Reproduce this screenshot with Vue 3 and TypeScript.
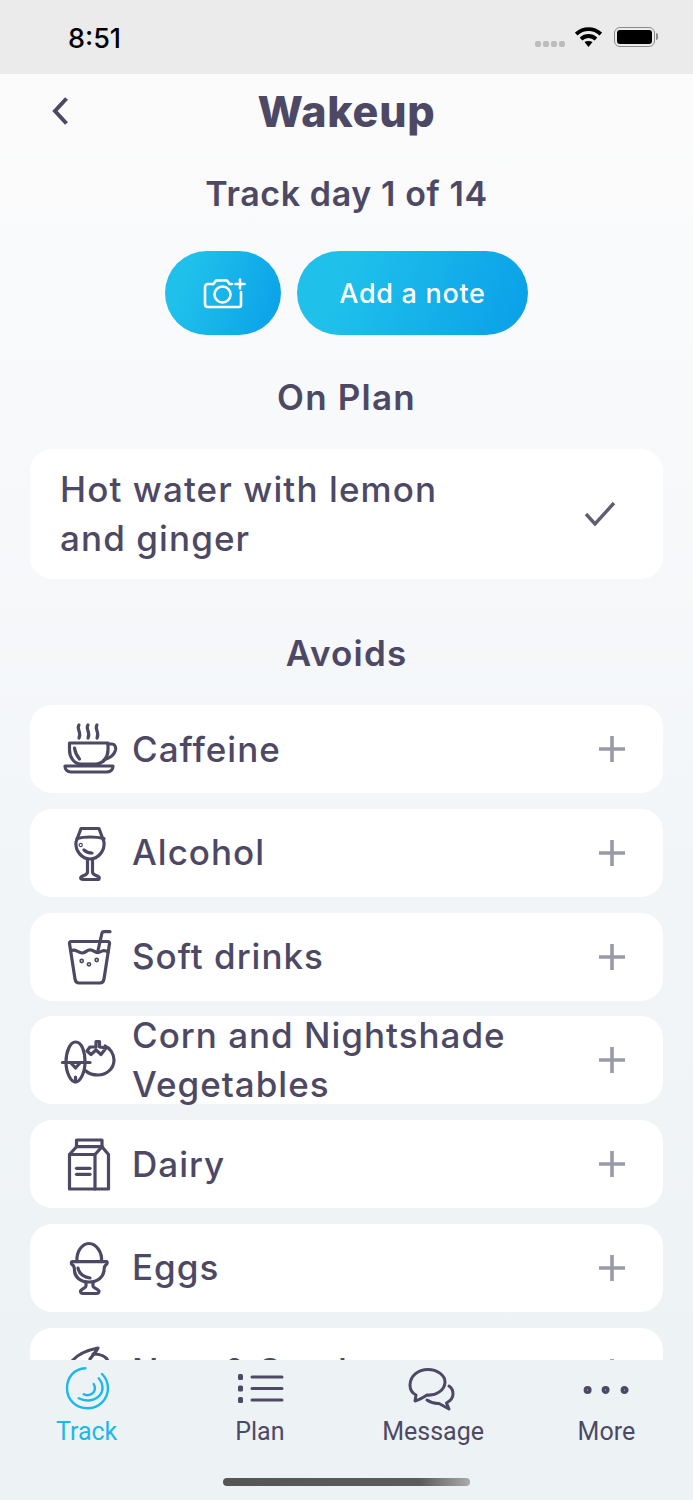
<template>
  <div class="screen">
    <div class="status-bar">
      <span class="time">8:51</span>
      <div class="status-icons">
        <div class="signal"><i></i><i></i><i></i><i></i></div>
        <svg class="wifi" width="27" height="20" viewBox="0 0 27 20">
          <path d="M1.2 7C8.500 .5 18.500 .5 25.800 7" fill="none" stroke="#000" stroke-width="3.800" />
          <path d="M6 12C10.500 8 16.500 8 21 12" fill="none" stroke="#000" stroke-width="3.800" />
          <path d="M9.500 15L13.500 20L17.500 15C15 13.500 12 13.500 9.500 15Z" fill="#000" />
        </svg>
        <div class="battery"><span class="battery-fill"></span></div>
      </div>
    </div>

    <div class="page">
      <header class="nav">
        <svg class="back" width="18" height="30" viewBox="0 0 18 30">
          <path d="M15.500 2.500L4 15L15.500 27.500" fill="none" stroke="#4d4965" stroke-width="4" />
        </svg>
        <h1>Wakeup</h1>
      </header>

      <div class="scroll">
        <h2 class="track-title">Track day 1 of 14</h2>
        <div class="actions">
          <button class="pill photo">
            <svg width="48" height="40" viewBox="0 0 48 40" fill="none" stroke="#fff" stroke-width="2.600" stroke-linecap="round" stroke-linejoin="round">
              <path d="M33 11H30.500L28 7.500H17L14.500 11H9C7.300 11 6 12.300 6 14V31C6 32.700 7.300 34 9 34H40C41.200 34 42 33.200 42 32V19" />
              <circle cx="23.500" cy="21.500" r="8" />
              <path d="M41 6.500V15.500M36.500 11H45.500" />
            </svg>
          </button>
          <button class="pill note">Add a note</button>
        </div>

        <h3 class="section-title">On Plan</h3>
        <div class="plan-card">
          <span class="plan-text">Hot water with lemon and ginger</span>
          <svg width="32" height="26" viewBox="0 0 32 26">
            <path d="M2 13L11 23L30 2" fill="none" stroke="#615e74" stroke-width="3.400" />
          </svg>
        </div>

        <h3 class="section-title avoids">Avoids</h3>
        <div class="avoid-list">
          <div v-for="item in avoids" :key="item.name" class="avoid-row">
            <svg class="avoid-icon" width="60" height="60" viewBox="0 0 60 60" fill="none" stroke="#4d4965" stroke-width="3.200" stroke-linecap="round" stroke-linejoin="round">
              <path v-for="d in item.paths" :key="d" :d="d" />
            </svg>
            <span class="avoid-name">{{ item.name }}</span>
            <svg class="plus" width="28" height="28" viewBox="0 0 28 28">
              <path d="M14 1V27M1 14H27" fill="none" stroke="#9a99a8" stroke-width="3.600" />
            </svg>
          </div>
        </div>
      </div>
    </div>

    <nav class="tabs">
      <div v-for="tab in tabs" :key="tab.label" class="tab" :class="{ active: tab.active }">
        <svg width="60" height="48" viewBox="0 0 60 48" fill="none" stroke="currentColor" stroke-width="3" stroke-linecap="round" stroke-linejoin="round">
          <path v-for="d in tab.paths" :key="d" :d="d" />
        </svg>
        <span>{{ tab.label }}</span>
      </div>
    </nav>
    <div class="home-bar"><span></span></div>
  </div>
</template>

<script setup lang="ts">
interface AvoidItem {
  name: string
  paths: string[]
}

interface TabItem {
  label: string
  active?: boolean
  paths: string[]
}

// small ring that reads as a filled dot once it is stroked
const dot = (x: number, y: number, r: number) =>
  `M${x - r} ${y}a${r} ${r} 0 1 0 ${r * 2} 0a${r} ${r} 0 1 0 ${-r * 2} 0Z`

const avoids: AvoidItem[] = [
  {
    name: 'Caffeine',
    paths: [
      'M9.500 24H48V31C48 38 43 45 36 45H21C14 45 9.500 38 9.500 31Z',
      'M48 25H52C55 25 56 28 55.500 31C54.500 36 50 39 44 41',
      'M14.500 29C15 34 17 37 19.500 40',
      'M5 47H53C53 50 51 53 47 53H11C7 53 5 50 5 47Z',
      'M19 6C16 10 22 13 19 19',
      'M28 6C25 10 31 13 28 19',
      'M37 6C34 10 40 13 37 19'
    ]
  },
  {
    name: 'Alcohol',
    paths: [
      'M21 5.500H39L44 19C45 28 38 36 30 36C22 36 15 28 16 19Z',
      'M17 15.500C24 13.500 36 13.500 44 15.500',
      dot(20.7, 22, 0.6),
      'M24 27C26 29 29 30 32 30',
      'M27.500 36V49C27.500 52 24 52 21 54C20 56 22 56.500 23 56.500H37C39 56.500 40 56 39 54C36 52 32.500 52 32.500 49V36'
    ]
  },
  {
    name: 'Soft drinks',
    paths: [
      'M11 14.500H48C49.500 14.500 49.500 15.500 49.500 16.500L44 52C43.500 55 42 56 40 56H19C17 56 15.500 55 15 52L9.500 16.500C9.500 15.500 9.500 14.500 11 14.500Z',
      'M11 24C15 21 18 26 22 26C26 26 27 22 31 23C35 24 37 27 40 25C43 23 45 23 48 25',
      'M38 23.500L42 6C42.300 5 43 4.700 44 4.700H50',
      dot(21.7, 34, 0.8),
      dot(29, 37.3, 0.8),
      dot(36.7, 33, 0.8)
    ]
  },
  {
    name: 'Corn and Nightshade Vegetables',
    paths: [
      'M15.500 12C22 12 25 22 25 32C25 43 20 52 15.500 52C11 52 6 43 6 32C6 22 10 12 15.500 12Z',
      'M2.500 32.500H30',
      'M11 33L15.500 38L20 33',
      'M15.500 47V52',
      'M45 16C50 18 54 24 54 30C54 39 46 45 38 45C33 45 29 44 26 41',
      'M27 21L31 24.500L36 20L41 24.500L46 18L39.500 17V11.500H36V17L30 17Z'
    ]
  },
  {
    name: 'Dairy',
    paths: [
      'M16.500 6H42V12.700H16.500Z',
      'M16.500 12.700L9.500 20.500V55H48.500V20.500L42 12.700',
      'M9.500 20.500H35L42 12.700',
      'M35 20.500V55',
      'M16.500 34.300H30',
      'M16.500 40.300H30'
    ]
  },
  {
    name: 'Eggs',
    paths: [
      'M17 23.700C16 14 22 5.500 29 5.500C36 5.500 42.500 14 41.500 23.700',
      'M12.500 23.700H46.500C47.500 23.700 47.500 26 46 27C44 28 44 30 44 33C43 39 38 44 29 44C20 44 15 39 14.500 33C14.500 30 14.500 28 12.500 27C11 26 11 23.700 12.500 23.700Z',
      'M18 30C19 35 23 39 30 40',
      'M26 44V48C26 50 21 51 20.500 53C20.500 55 21.500 55.500 23 55.500H36.500C38 55.500 39 55 39 53C38.500 51 33 50 33 48V44'
    ]
  },
  {
    name: 'Nuts & Seeds',
    paths: [
      'M12 19C18 12 28 8 38 6C36 10 33 13 30 17',
      'M33 12C40 12 46 14 48 19'
    ]
  }
]

const tabs: TabItem[] = [
  {
    label: 'Track',
    active: true,
    paths: [
      'M28.400 4.300C17 5 10 13 10 24.300C10 36 19 44.300 30.500 44.300C42 44.300 51 35 51 24.300C51 19 49 14 45 10',
      'M41.700 14.300C46 19 47 26 43 31C38 37 29 38 21.700 34.300',
      'M36.700 20C39 24 38 28 34.500 30C32 31.500 29 31.500 26.700 30.300'
    ]
  },
  {
    label: 'Plan',
    paths: [
      'M9.500 11.500H11.500V14.500H9.500Z',
      'M9.500 23H11.500V26H9.500Z',
      'M9.500 34.500H11.500V37.500H9.500Z',
      'M22 13H52M22 24.500H52M22 36H52'
    ]
  },
  {
    label: 'Message',
    paths: [
      'M12 37L13 31C9 29 7 25 7 21C7 12 15 5.500 25 5.500C34 5.500 42 11 42 18C42 26 33 32 24 31C21 33 16 36 12 37Z',
      'M46 22C49 24 50 27 50 30C50 34 47 37 43.500 39L46 45L36 39.500C31 40 27 38 24 36'
    ]
  },
  {
    label: 'More',
    paths: [
      dot(11.6, 26, 2.5), dot(11.6, 26, 1),
      dot(29.6, 26, 2.5), dot(29.6, 26, 1),
      dot(48.6, 26, 2.5), dot(48.6, 26, 1)
    ]
  }
]
</script>

<style scoped>
.screen {
  width: 693px;
  height: 1500px;
  display: flex;
  flex-direction: column;
  background: #edf2f5;
  overflow: hidden;
  font-family: Inter, "Liberation Sans", sans-serif;
  color: #4d4965;
}

.status-bar {
  height: 74px;
  flex: none;
  display: flex;
  align-items: center;
  justify-content: space-between;
  padding: 0 38px 0 68px;
  box-sizing: border-box;
  background: #ebebeb;
}

.time {
  margin-top: 2px;
  font-size: 27px;
  font-weight: 500;
  color: #000;
}

.status-icons {
  display: flex;
  align-items: center;
  gap: 12px;
}

.signal {
  display: flex;
  gap: 2px;
  margin-top: 13px;
  margin-right: -2px;
}

.signal i {
  width: 6px;
  height: 6px;
  border-radius: 2px;
  background: #bcbcbc;
}

.battery {
  width: 41px;
  height: 20px;
  box-sizing: border-box;
  padding: 2px;
  border: 1.500px solid #8a8a8a;
  border-radius: 6px;
  position: relative;
}

.battery::after {
  content: "";
  position: absolute;
  right: -4px;
  top: 5px;
  width: 2px;
  height: 7px;
  border-radius: 0 2px 2px 0;
  background: #8a8a8a;
}

.battery-fill {
  display: block;
  height: 100%;
  border-radius: 3px;
  background: #000;
}

.page {
  flex: 1;
  min-height: 0;
  display: flex;
  flex-direction: column;
  background: linear-gradient(180deg, #fbfbfb 0%, #f8f9fb 25%, #edf2f5 100%);
  overflow: hidden;
}

.nav {
  height: 76px;
  flex: none;
  display: flex;
  align-items: center;
  justify-content: center;
  position: relative;
}

.nav h1 {
  margin: 0 0 2px;
  font-size: 43px;
  font-weight: 800;
  letter-spacing: 0.8px;
}

.back {
  position: absolute;
  left: 51px;
  top: 22px;
}

.scroll {
  flex: 1;
  min-height: 0;
  overflow: hidden;
  padding: 0 30px;
  display: flex;
  flex-direction: column;
}

.track-title {
  margin: 24px 0 0;
  height: 40px;
  line-height: 40px;
  font-size: 34px;
  font-weight: 600;
  letter-spacing: 0.6px;
  text-align: center;
}

.actions {
  display: flex;
  justify-content: center;
  gap: 16px;
  margin-top: 37px;
}

.pill {
  height: 84px;
  border: none;
  border-radius: 42px;
  background: linear-gradient(110deg, #1fc1eb 20%, #0a9fe8 100%);
  color: #fff;
  font-family: inherit;
  font-size: 27px;
  font-weight: 500;
  letter-spacing: 0.7px;
  display: flex;
  align-items: center;
  justify-content: center;
  padding: 0;
}

.photo {
  width: 116px;
}

.note {
  width: 231px;
}

.section-title {
  margin: 42px 0 0;
  height: 40px;
  line-height: 40px;
  font-size: 35px;
  font-weight: 600;
  letter-spacing: 1.200px;
  text-align: center;
}

.avoids {
  margin-top: 54px;
}

.plan-card {
  margin-top: 32px;
  height: 130px;
  flex: none;
  display: flex;
  align-items: center;
  justify-content: space-between;
  box-sizing: border-box;
  padding: 0 47px 0 30px;
  border-radius: 22px;
  background: #fff;
}

.plan-text {
  width: 420px;
  font-size: 35px;
  font-weight: 500;
  letter-spacing: 1.100px;
  line-height: 49px;
}

.avoid-list {
  margin-top: 32px;
  display: flex;
  flex-direction: column;
  gap: 15.800px;
}

.avoid-row {
  height: 88px;
  flex: none;
  display: flex;
  align-items: center;
  box-sizing: border-box;
  padding: 0 37px 0 30px;
  border-radius: 22px;
  background: #fff;
}

.avoid-icon {
  flex: none;
}

.avoid-name {
  flex: 1;
  margin-left: 12px;
  margin-right: 60px;
  font-size: 35px;
  font-weight: 500;
  letter-spacing: 1px;
  line-height: 49px;
}

.plus {
  flex: none;
}

.tabs {
  height: 108px;
  flex: none;
  display: grid;
  grid-template-columns: repeat(4, 1fr);
  background: #edf2f5;
}

.tab {
  display: flex;
  flex-direction: column;
  align-items: center;
  padding-top: 4px;
  color: #4d4965;
  font-family: Roboto, sans-serif;
  font-size: 25px;
}

.tab span {
  margin-top: 5px;
  line-height: 30px;
}

.tab.active {
  color: #1cb8ec;
}

.tab.active svg {
  stroke-width: 2.400;
}

.home-bar {
  height: 32px;
  flex: none;
  display: flex;
  justify-content: center;
  padding-top: 10px;
  box-sizing: border-box;
  background: #edf2f5;
}

.home-bar span {
  width: 247px;
  height: 8px;
  border-radius: 4px;
  background: linear-gradient(90deg, #555 0%, #5c5c5c 80%, #aaa 100%);
}
</style>
